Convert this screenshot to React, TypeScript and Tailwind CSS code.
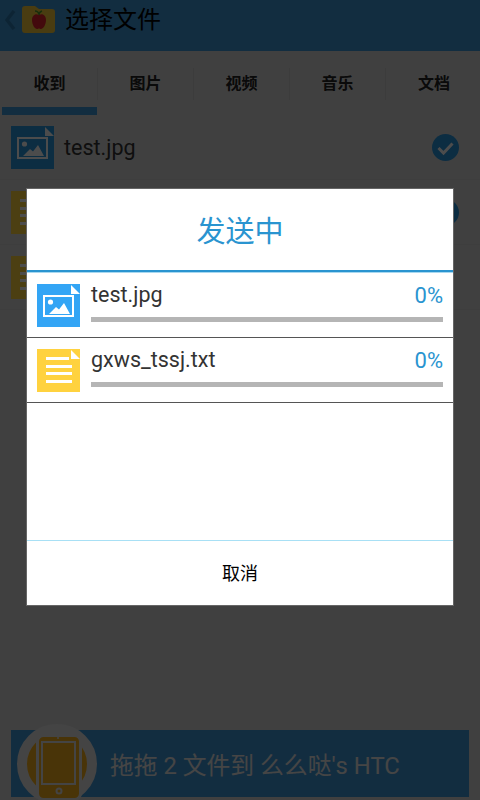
const font = { fontFamily: 'Roboto, "Noto Sans CJK SC", sans-serif' };

const ImageFileIcon = ({ color }: { color: string }) => (
  <svg width="43" height="43" viewBox="0 0 43 43" className="shrink-0 block">
    <rect width="43" height="43" fill={color} />
    <path d="M34 1L43 10H34Z" fill="#fff" />
    <rect x="7" y="12" width="29" height="20" fill="none" stroke="#fff" strokeWidth="2" />
    <circle cx="13.500" cy="18" r="2.600" fill="#fff" />
    <path d="M12 30L19 23L22 25.500L27 19L33 30Z" fill="#fff" />
  </svg>
);

const TextFileIcon = () => (
  <svg width="43" height="43" viewBox="0 0 43 43" className="shrink-0 block">
    <rect width="43" height="43" fill="#ffd23f" />
    <path d="M34 1L43 10H34Z" fill="#fff" />
    <rect x="9" y="8" width="23" height="3" fill="#fff" />
    <rect x="9" y="16" width="26" height="3" fill="#fff" />
    <rect x="9" y="23" width="26" height="3" fill="#fff" />
    <rect x="9" y="31" width="26" height="3" fill="#fff" />
  </svg>
);

const FolderApple = () => (
  <svg width="33" height="27" viewBox="0 0 33 27" className="block">
    <path d="M0 3Q0 0 3 0H13L17 3H30Q33 3 33 6V24Q33 27 30 27H3Q0 27 0 24Z" fill="#f5c93a" />
    <path d="M17 9C13 7 10 10 10 14C10 19 13 23 15 23C16 23 16.500 22.500 17 22.500C17.500 22.500 18 23 19 23C21 23 24 19 24 14C24 10 21 7 17 9Z" fill="#e0242c" />
    <path d="M17 9Q17 6 20 5" fill="none" stroke="#4d9a2a" strokeWidth="1.500" />
    <path d="M13 5Q16 5 17 8" fill="none" stroke="#4d9a2a" strokeWidth="1.500" />
  </svg>
);

const Tablet = () => (
  <svg width="80" height="80" viewBox="0 0 80 80" className="block overflow-visible">
    <circle cx="40" cy="40" r="35" fill="#f6ad1b" stroke="#e4e4e4" strokeWidth="10" />
    <rect x="20.500" y="11.500" width="43" height="64" rx="6" fill="#f6ad1b" stroke="#e4e4e4" strokeWidth="3" />
    <rect x="25" y="18" width="33" height="42" fill="none" stroke="#e4e4e4" strokeWidth="2" />
    <circle cx="42" cy="67" r="2.500" fill="none" stroke="#e4e4e4" strokeWidth="2" />
    <circle cx="41" cy="14" r="1" fill="#e4e4e4" />
  </svg>
);

const tabs = ['收到', '图片', '视频', '音乐', '文档'];

const BackgroundRow = ({ name, checked, image }: { name?: string; checked?: boolean; image?: boolean }) => (
  <div className="flex h-[65px] items-center border-b border-[#cfcfcf] pl-[11px] pr-[21px]">
    {image ? <ImageFileIcon color="#2a96dc" /> : <TextFileIcon />}
    <span className="ml-[10px] flex-1 pt-[3px] text-[21.500px] text-[#333]">{name}</span>
    {checked && (
      <svg width="27" height="27" viewBox="0 0 27 27" className="block">
        <circle cx="13.500" cy="13.500" r="13.500" fill="#2a96dc" />
        <path d="M6.500 14L11.500 19L20.500 9.500" fill="none" stroke="#fff" strokeWidth="3" />
      </svg>
    )}
  </div>
);

const SendRow = ({ name, icon }: { name: string; icon: React.ReactNode }) => (
  <div className="flex h-[65px] border-b border-[#555] pl-[10px] pr-[10px] pt-[11px]">
    {icon}
    <div className="ml-[11px] flex-1">
      <div className="flex h-[33px] items-center justify-between pb-[10px]">
        <span className="text-[21.500px] text-[#333]">{name}</span>
        <span className="text-[22px] text-[#2a94d0]">0%</span>
      </div>
      <div className="h-[5px] bg-[#b5b5b5]" />
    </div>
  </div>
);

export default function App() {
  return (
    <div className="relative h-[800px] w-[480px] overflow-hidden bg-[#d8d8d8]" style={font}>
      {/* page under the dialog */}
      <header className="flex h-[51px] items-center bg-[#3f96d5] pb-[12px] pl-[5px]">
        <svg width="11" height="20" viewBox="0 0 11 20" className="block">
          <path d="M9 1L2 10L9 19" fill="none" stroke="#2e7bb0" strokeWidth="3.500" />
        </svg>
        <div className="ml-[6px]">
          <FolderApple />
        </div>
        <h1 className="ml-[10px] text-[24px] font-normal text-black">选择文件</h1>
      </header>

      <nav className="flex h-[64px] pl-[2px] pt-[17px]">
        {tabs.map((tab, i) => (
          <div
            key={tab}
            className={`flex h-[32px] w-[96px] shrink-0 items-center justify-center text-[16px] font-bold text-[#222] ${
              i < 4 ? 'border-r border-[#c8c8c8]' : ''
            }`}
          >
            {tab}
          </div>
        ))}
      </nav>
      <div className="relative h-0">
        <div className="absolute bottom-0 left-[2px] h-[8px] w-[95px] bg-[#3f96d5]" />
      </div>

      <BackgroundRow name="test.jpg" checked image />
      <BackgroundRow checked />
      <BackgroundRow />

      <div className="absolute bottom-[3px] left-[11px] right-[11px] flex h-[67px] items-center bg-[#3f96d5]">
        <div className="ml-[6px]">
          <Tablet />
        </div>
        <span className="ml-[13px] pt-[6px] text-[23.800px] text-[#e8e8e8]">拖拖 2 文件到 么么哒's HTC</span>
      </div>

      {/* dim layer and dialog */}
      <div className="absolute inset-0 flex justify-center bg-black/70 pt-[189px]">
        <div className="flex h-[416px] w-[426px] flex-col bg-white ring-1 ring-[#666]">
          <div className="flex h-[83px] items-center justify-center border-b-2 border-[#2a94d0] pt-[6px] text-[29px] text-[#2a94d0]">
            发送中
          </div>
          <div className="h-px bg-[#a8d8f0]" />
          <SendRow name="test.jpg" icon={<ImageFileIcon color="#33a5f5" />} />
          <SendRow name="gxws_tssj.txt" icon={<TextFileIcon />} />
          <div className="flex-1 border-b border-[#a8e0f5]" />
          <div className="flex h-[64px] items-center justify-center text-[18px] text-black">取消</div>
        </div>
      </div>
    </div>
  );
}
